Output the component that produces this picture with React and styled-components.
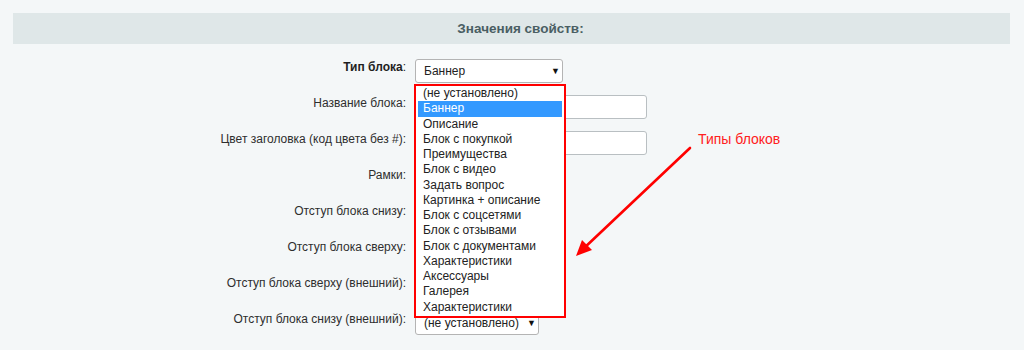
import React from "react";
import styled, { createGlobalStyle } from "styled-components";

const blockTypes = [
  "(не установлено)",
  "Баннер",
  "Описание",
  "Блок с покупкой",
  "Преимущества",
  "Блок с видео",
  "Задать вопрос",
  "Картинка + описание",
  "Блок с соцсетями",
  "Блок с отзывами",
  "Блок с документами",
  "Характеристики",
  "Аксессуары",
  "Галерея",
  "Характеристики",
];

// rows whose controls sit under the open list are left without a visible control
const rows = [
  { label: "Тип блока", bold: true, control: "type" },
  { label: "Название блока", control: "input" },
  { label: "Цвет заголовка (код цвета без #)", control: "input" },
  { label: "Рамки" },
  { label: "Отступ блока снизу" },
  { label: "Отступ блока сверху" },
  { label: "Отступ блока сверху (внешний)" },
  { label: "Отступ блока снизу (внешний)", control: "select" },
];

const App = () => {
  return (
    <>
      <GlobalStyle />
      <StyledPage>
        <StyledHeader>Значения свойств:</StyledHeader>
        <StyledForm>
          {rows.map((row, i) => (
            <React.Fragment key={i}>
              <StyledLabel $bold={row.bold}>
                {row.bold ? <b>{row.label}</b> : row.label}:
              </StyledLabel>
              <StyledCell>
                {row.control === "type" && (
                  <StyledSelectWrap>
                    <StyledSelect $width={148}>
                      Баннер
                      <StyledCaret>▼</StyledCaret>
                    </StyledSelect>
                    <StyledDropdown>
                      {blockTypes.map((t, j) => (
                        <StyledOption key={j} $active={j === 1}>
                          {t}
                        </StyledOption>
                      ))}
                    </StyledDropdown>
                  </StyledSelectWrap>
                )}
                {row.control === "input" && <StyledInput />}
                {row.control === "select" && (
                  <StyledSelect $width={124}>
                    (не установлено)
                    <StyledCaret>▼</StyledCaret>
                  </StyledSelect>
                )}
              </StyledCell>
            </React.Fragment>
          ))}
        </StyledForm>
        <StyledNote>Типы блоков</StyledNote>
        <StyledArrow width="130" height="120" viewBox="0 0 130 120">
          <line
            x1="120"
            y1="4"
            x2="12"
            y2="106"
            stroke="#ff0000"
            strokeWidth="2.6"
            strokeLinecap="round"
          />
          <polygon points="6,112 12,96 22,106" fill="#ff0000" />
        </StyledArrow>
      </StyledPage>
    </>
  );
};

const GlobalStyle = createGlobalStyle`
  body {
    margin: 0;
    background: #f4f7f8;
    font-family: "Liberation Sans", Arial, sans-serif;
    font-size: 12px;
    color: #2a2a2a;
  }
`;

const StyledPage = styled.div`
  position: relative;
  padding: 13px 14px 0 13px;
  height: 350px;
  box-sizing: border-box;
  overflow: hidden;
`;

const StyledHeader = styled.div`
  height: 31px;
  background: #dfe7e8;
  display: flex;
  align-items: center;
  justify-content: center;
  padding-left: 18px;
  font-weight: bold;
  font-size: 13.5px;
  color: #4a5e63;
`;

const StyledForm = styled.div`
  display: grid;
  grid-template-columns: 393px 1fr;
  grid-auto-rows: 36px;
  column-gap: 9px;
  margin-top: 9px;
`;

const StyledLabel = styled.div`
  text-align: right;
  align-self: center;
  margin-top: -8px;
  color: ${(p) => (p.$bold ? "#1f1f1f" : "#2e2e2e")};
  b {
    font-weight: bold;
  }
`;

const StyledCell = styled.div`
  display: flex;
  align-items: center;
`;

const StyledSelectWrap = styled.div`
  position: relative;
`;

const StyledSelect = styled.div`
  position: relative;
  width: ${(p) => p.$width}px;
  height: 24px;
  box-sizing: border-box;
  border: 1px solid #b4b4b4;
  border-radius: 3px;
  background: #fff;
  padding-left: 8px;
  display: flex;
  align-items: center;
  color: #222;
`;

const StyledCaret = styled.span`
  position: absolute;
  right: 2px;
  top: 6px;
  font-size: 9px;
  color: #111;
`;

const StyledDropdown = styled.div`
  position: absolute;
  top: 25px;
  left: -1px;
  width: 152px;
  box-sizing: border-box;
  border: 2px solid #ff0000;
  background: #fff;
  padding: 0 2px 1px;
  z-index: 5;
`;

const StyledOption = styled.div`
  height: 15.27px;
  line-height: 14px;
  padding-left: 5px;
  white-space: nowrap;
  background: ${(p) => (p.$active ? "#3399ff" : "transparent")};
  color: ${(p) => (p.$active ? "#fff" : "#222")};
`;

const StyledInput = styled.div`
  width: 232px;
  height: 24px;
  box-sizing: border-box;
  border: 1px solid #b9bfc2;
  border-radius: 3px;
  background: #fff;
`;

const StyledNote = styled.div`
  position: absolute;
  left: 698px;
  top: 131px;
  color: #ff2020;
  font-size: 14px;
`;

const StyledArrow = styled.svg`
  position: absolute;
  left: 570px;
  top: 144px;
  overflow: visible;
`;

export default App;
